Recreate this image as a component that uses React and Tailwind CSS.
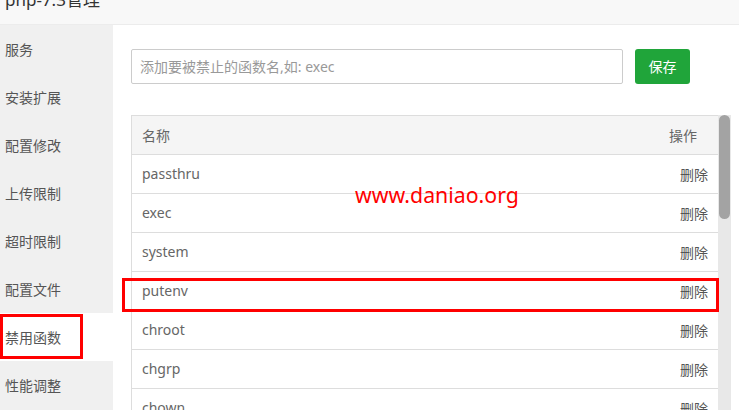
const menuItems = ["服务", "安装扩展", "配置修改", "上传限制", "超时限制", "配置文件", "禁用函数", "性能调整"];
const funcs = ["passthru", "exec", "system", "putenv", "chroot", "chgrp", "chown"];

const font = { fontFamily: '"Noto Sans", "Noto Sans CJK SC", sans-serif' };

const App = () => {
  return (
    <div className="relative w-[739px] h-[410px] overflow-hidden bg-white" style={font}>
      {/* title bar, scrolled so only the lower part shows */}
      <div className="h-[25px] overflow-hidden bg-[#f8f8f8] border-b border-[#ececec]">
        <div className="-mt-[12px] pl-[5px] text-[17px] leading-[24px] text-[#333]">php-7.3管理</div>
      </div>

      <div className="flex h-[385px]">
        <div className="w-[113px] shrink-0 bg-[#f0f0f0]">
          {menuItems.map((m) => (
            <div
              key={m}
              className={`h-[48px] flex items-center pl-[5px] text-[14px] text-[#555] ${m === "禁用函数" ? "bg-white" : ""}`}
            >
              {m}
            </div>
          ))}
        </div>

        <div className="flex-1 pl-[18px] pt-[24px] overflow-hidden">
          <div className="flex items-center gap-[12px]">
            <input
              className="w-[492px] h-[35px] border border-[#ccc] rounded-[2px] px-[8px] text-[14px] text-[#555] placeholder:text-[#999] outline-none"
              placeholder="添加要被禁止的函数名,如: exec"
            />
            <button className="w-[55px] h-[35px] bg-[#20a53a] rounded-[3px] text-white text-[14px]">保存</button>
          </div>

          <div className="flex mt-[31px] w-[600px]">
            <div className="w-[587px] border-l border-t border-[#ddd]">
              <div className="h-[39px] flex items-center justify-between bg-[#f5f5f5] border-b border-[#ddd] pl-[10px] pr-[21px] text-[14px] text-[#666]">
                <span>名称</span>
                <span>操作</span>
              </div>
              {funcs.map((f) => (
                <div key={f} className="h-[39px] flex items-center justify-between border-b border-[#ddd] pl-[10px] pr-[10px] text-[14px]">
                  <span className="text-[#666] -mt-[1px]">{f}</span>
                  <span className="text-[#555]">删除</span>
                </div>
              ))}
            </div>
            <div className="w-[13px] bg-[#e8e8e8] h-[300px]">
              <div className="mx-auto w-[11px] h-[104px] rounded-full bg-[#a3a3a3]"></div>
            </div>
          </div>
        </div>
      </div>

      {/* annotations over the screenshot */}
      <div className="absolute left-[355px] top-[180px] text-[21.3px] leading-[30px] text-[#ff0000]">www.daniao.org</div>
      <div className="absolute left-[0px] top-[314px] w-[83px] h-[45px] border-[3px] border-[#ff0000]"></div>
      <div className="absolute left-[122px] top-[278px] w-[597px] h-[34px] border-[3px] border-[#ff0000]"></div>
    </div>
  );
};

export default App;
